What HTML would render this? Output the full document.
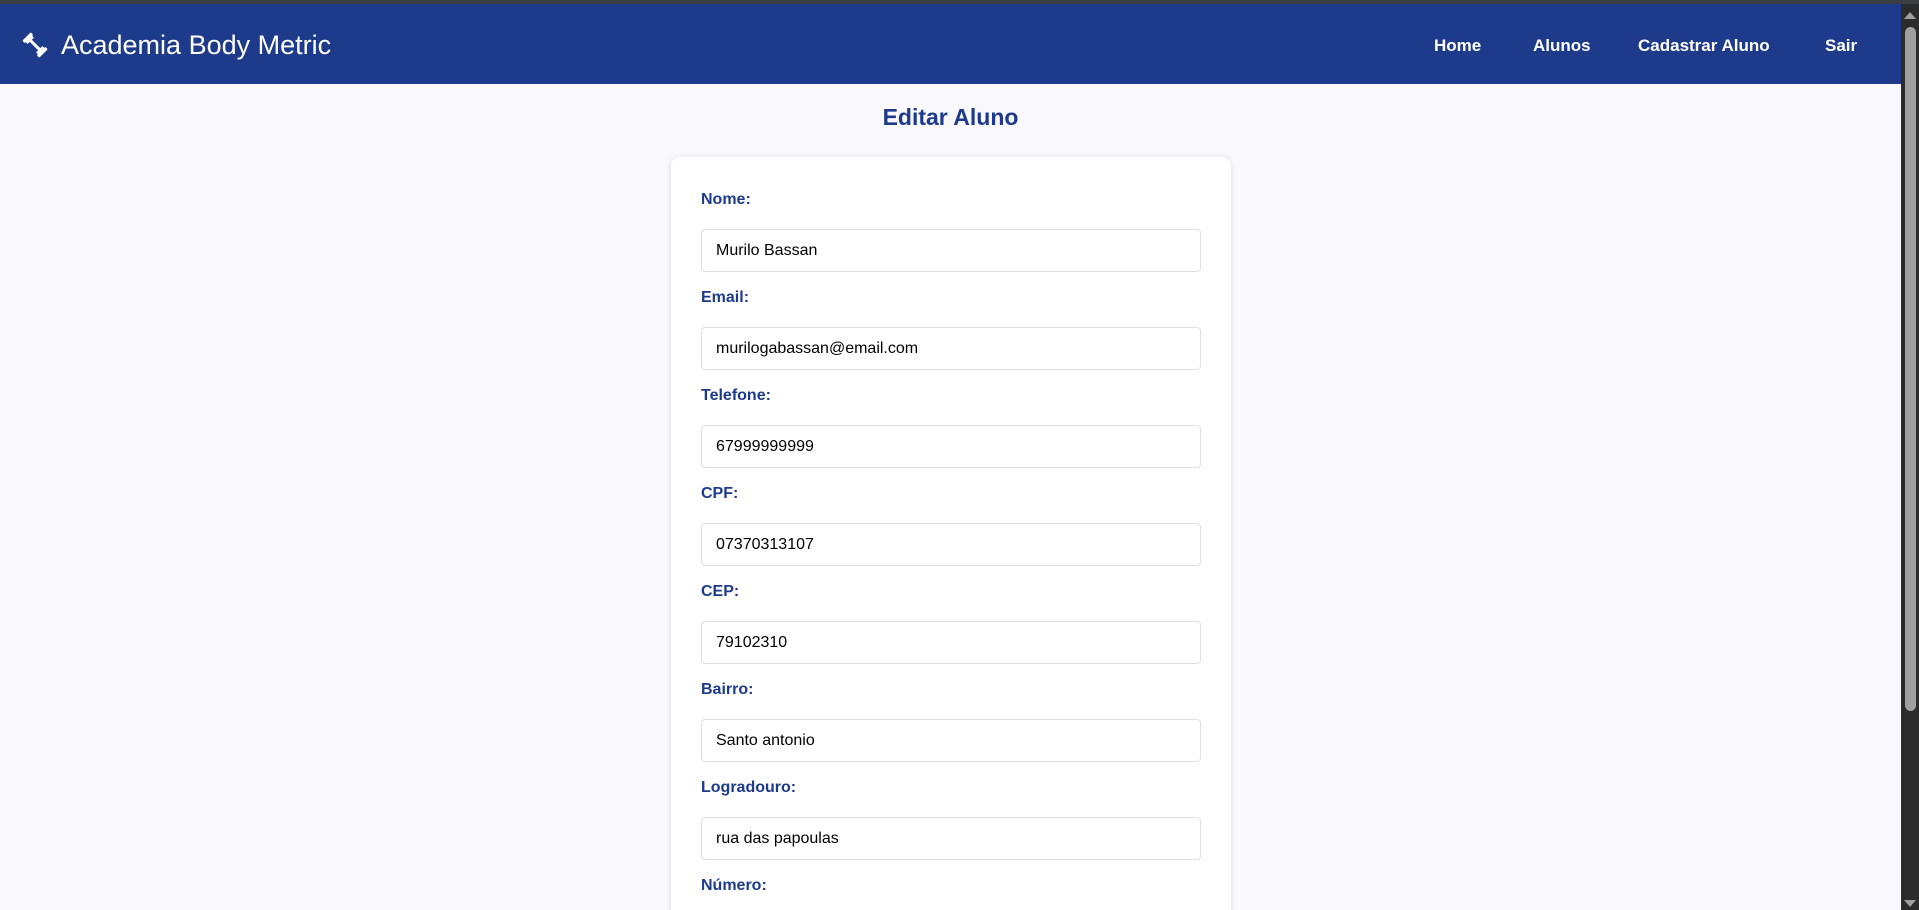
<!DOCTYPE html>
<html><head><meta charset="utf-8"><style>
*{box-sizing:border-box;margin:0;padding:0}
html,body{width:1919px;height:910px;overflow:hidden}
body{background:#f8f8fd;font-family:"Liberation Sans",Arial,sans-serif;position:relative}
.top{position:absolute;left:0;top:0;width:1919px;height:4px;background:#3a3d42}
.hdr{position:absolute;left:0;top:4px;width:1901px;height:80px;background:#1e3a8a;color:#fff}
.brand{position:absolute;left:61px;top:26px;font-size:27px;white-space:nowrap}
.ico{position:absolute;left:22px;top:28px}
.nav a{position:absolute;top:32px;font-size:17px;font-weight:bold;color:#fff;text-decoration:none;white-space:nowrap}
.sb{position:absolute;right:0;top:4px;width:18px;height:906px;background:#2b2b2b}
.sb .th{position:absolute;left:4px;top:23px;width:11px;height:684px;background:#a0a0a0;border-radius:6px}
.sb .up{position:absolute;left:3px;top:8px;width:0;height:0;border-left:6px solid transparent;border-right:6px solid transparent;border-bottom:7px solid #a0a0a0}
.sb .dn{position:absolute;left:3px;bottom:3px;width:0;height:0;border-left:6px solid transparent;border-right:6px solid transparent;border-top:7px solid #a0a0a0}
h1{position:absolute;left:0;width:1901px;top:104px;text-align:center;font-size:23px;color:#1e3a8a;font-weight:bold}
.card{position:absolute;left:671px;top:157px;width:560px;height:800px;background:#fff;border-radius:9px;box-shadow:0 1px 6px rgba(0,0,0,.12)}
.lab{position:absolute;left:30px;font-size:16px;color:#1e3a8a;font-weight:bold}
.inp{position:absolute;left:30px;width:500px;height:43px;border:1px solid #dfdfe4;border-radius:4px;font-size:16px;color:#000;padding-left:14px;line-height:41px}
</style></head><body>
<div class="top"></div>
<div class="hdr">
<svg class="ico" width="26" height="26" viewBox="0 0 26 26" fill="#fff"><g transform="rotate(45 13 13)"><rect x="3" y="11.5" width="20" height="3"/><rect x="1" y="7" width="3.5" height="12" rx="1"/><rect x="4.5" y="8.5" width="2.5" height="9"/><rect x="21.5" y="7" width="3.5" height="12" rx="1"/><rect x="19" y="8.5" width="2.5" height="9"/></g></svg>
<div class="brand">Academia Body Metric</div>
<div class="nav"><a style="left:1434px">Home</a><a style="left:1533px">Alunos</a><a style="left:1638px">Cadastrar Aluno</a><a style="left:1825px">Sair</a></div>
</div>
<div class="sb"><div class="up"></div><div class="th"></div><div class="dn"></div></div>
<h1>Editar Aluno</h1>
<div class="card">
<div class="lab" style="top:34px">Nome:</div><div class="inp" style="top:72px">Murilo Bassan</div>
<div class="lab" style="top:132px">Email:</div><div class="inp" style="top:170px">murilogabassan@email.com</div>
<div class="lab" style="top:230px">Telefone:</div><div class="inp" style="top:268px">67999999999</div>
<div class="lab" style="top:328px">CPF:</div><div class="inp" style="top:366px">07370313107</div>
<div class="lab" style="top:426px">CEP:</div><div class="inp" style="top:464px">79102310</div>
<div class="lab" style="top:524px">Bairro:</div><div class="inp" style="top:562px">Santo antonio</div>
<div class="lab" style="top:622px">Logradouro:</div><div class="inp" style="top:660px">rua das papoulas</div>
<div class="lab" style="top:720px">Número:</div>
</div>
</body></html>
